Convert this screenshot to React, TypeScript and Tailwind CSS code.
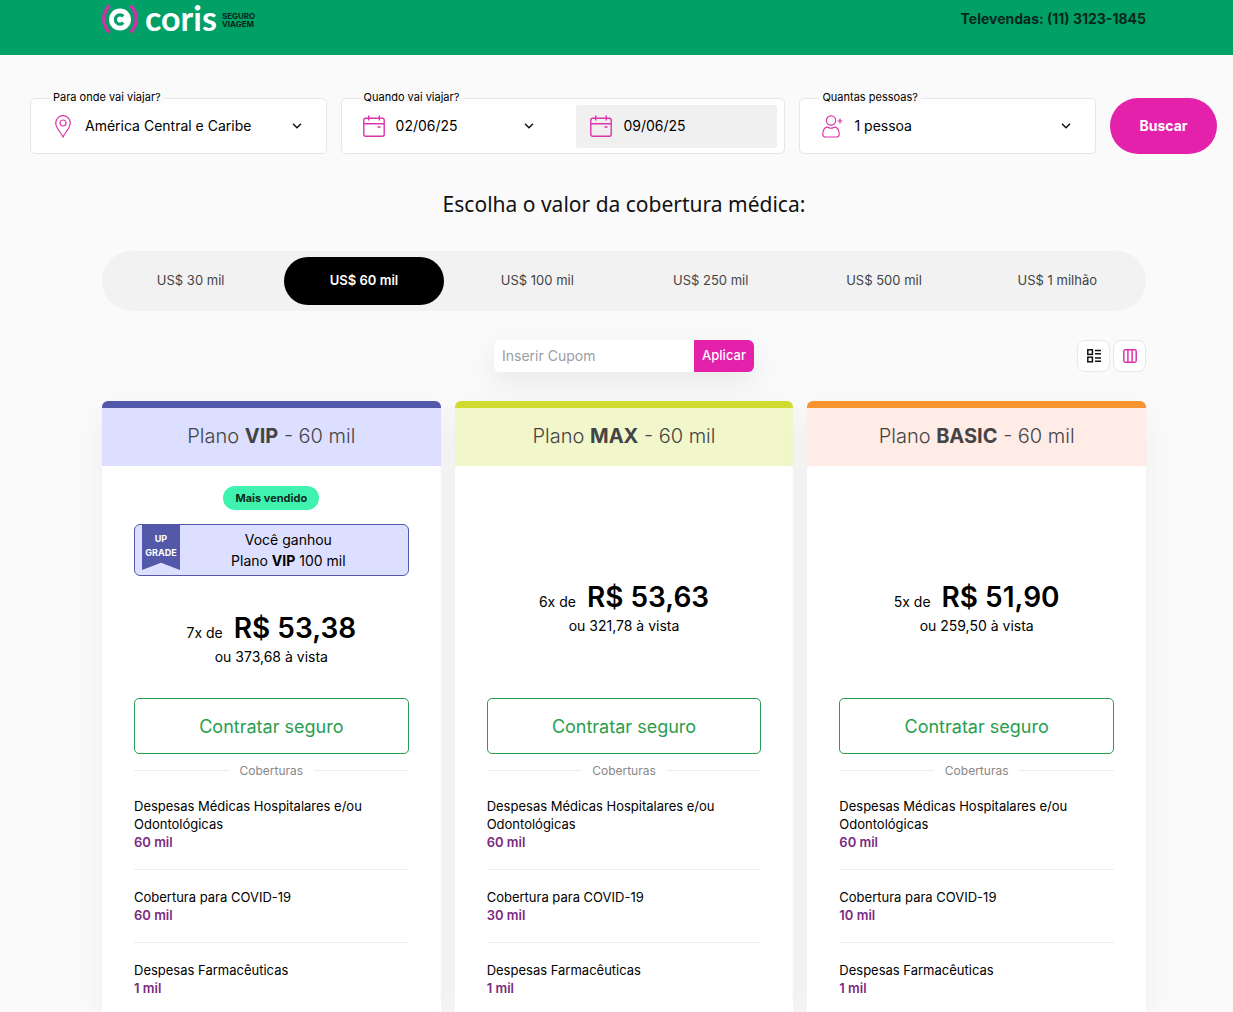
import type { ReactNode } from "react";

function Logo() {
  return (
    <a href="#" className="flex items-start" aria-label="Coris Seguro Viagem">
      <svg width="36" height="30" viewBox="0 0 36 30" fill="none" className="mt-1 shrink-0">
        <path d="M7.5 1.5C4.5 4.5 1.8 9 1.8 15S4.5 25.5 7.5 28.5" stroke="#d42fa6" strokeWidth="3.4" />
        <path d="M28.5 1.5C31.5 4.5 34.2 9 34.2 15S31.5 25.5 28.5 28.5" stroke="#d42fa6" strokeWidth="3.4" />
        <circle cx="18" cy="15.5" r="11" fill="#fff" />
        <path d="M21.3 12.3A4.6 4.6 0 1 0 21.3 18.7" stroke="#00a067" strokeWidth="3.2" />
      </svg>
      <span className="ml-[7px] font-['Lato',sans-serif] text-[34px] leading-9 font-bold text-white">coris</span>
      <span className="mt-3 ml-[5px] text-[8px] leading-2 font-bold text-[#06281c]">
        SEGURO
        <br />
        VIAGEM
      </span>
    </a>
  );
}

function Chevron() {
  return (
    <svg width="10" height="6" viewBox="0 0 10 6" fill="none" stroke="#111" strokeWidth="1.5" className="pointer-events-none shrink-0">
      <path d="M1 0.8L5 4.8L9 0.8" />
    </svg>
  );
}

function PinIcon() {
  return (
    <svg width="16" height="23" viewBox="0 0 16 23" fill="none" stroke="#dc35ab" strokeWidth="1.2" className="shrink-0">
      <path d="M8 22C6 17.5 0.7 13 0.7 8A7.3 7.3 0 0 1 15.3 8C15.3 13 10 17.5 8 22Z" />
      <circle cx="8" cy="8" r="3" />
    </svg>
  );
}

function CalendarIcon() {
  return (
    <svg width="22" height="22" viewBox="0 0 22 22" fill="none" stroke="#dc35ab" strokeWidth="1.4" className="shrink-0">
      <rect x="0.8" y="3.2" width="20.4" height="18" rx="1.8" />
      <path d="M0.8 8.7H21.2M5.7 0.5V5.5M16.3 0.5V5.5M14.5 12H17.5" />
    </svg>
  );
}

function PersonIcon() {
  return (
    <svg width="21" height="23" viewBox="0 0 21 23" fill="none" stroke="#dc35ab" strokeWidth="1.2" className="shrink-0">
      <circle cx="9" cy="5.5" r="4.6" />
      <path d="M3.5 22C1.5 22 0.8 21 0.8 19.2C0.8 15 2.8 12.2 5 12.2C6.3 12.2 7 13.2 9 13.2S11.7 12.2 13 12.2C15.2 12.2 17.2 15 17.2 19.2C17.2 21 16.5 22 14.5 22Z" />
      <path d="M18 3.5V8.5M15.5 6H20.5" />
    </svg>
  );
}

function Field({ id, label, children }: { id: string; label: string; children: ReactNode }) {
  return (
    <div className="relative flex h-14 items-center rounded-[5px] border border-[#e6e6e8] bg-white">
      <label htmlFor={id} className="absolute -top-[9px] left-[19px] bg-[#fafafa] px-[3px] text-[11px] leading-[14px]">
        {label}
      </label>
      {children}
    </div>
  );
}

function SelectField({ id, label, value, icon }: { id: string; label: string; value: string; icon: ReactNode }) {
  return (
    <Field id={id} label={label}>
      <div className="relative flex w-full items-center pr-6 pl-[22px]">
        <span className="flex w-8 shrink-0">{icon}</span>
        <select id={id} defaultValue={value} className="min-w-0 flex-1 appearance-none bg-transparent text-sm leading-6 outline-none">
          <option>{value}</option>
        </select>
        <Chevron />
      </div>
    </Field>
  );
}

const tabs = ["US$ 30 mil", "US$ 60 mil", "US$ 100 mil", "US$ 250 mil", "US$ 500 mil", "US$ 1 milhão"];

type Plan = {
  name: string;
  times: string;
  price: string;
  total: string;
  covid: string;
  header: string;
  upgrade: boolean;
};

const plans: Plan[] = [
  { name: "VIP", times: "7x de", price: "R$ 53,38", total: "ou 373,68 à vista", covid: "60 mil", header: "border-[#5359a8] bg-[#dcdfff]", upgrade: true },
  { name: "MAX", times: "6x de", price: "R$ 53,63", total: "ou 321,78 à vista", covid: "30 mil", header: "border-[#cfdb2f] bg-[#f2f6cb]", upgrade: false },
  { name: "BASIC", times: "5x de", price: "R$ 51,90", total: "ou 259,50 à vista", covid: "10 mil", header: "border-[#f7942f] bg-[#ffece6]", upgrade: false },
];

function UpgradeBox() {
  return (
    <>
      <span className="mt-5 rounded-full bg-[#3ff3ae] px-3 text-[11px] leading-6 font-bold text-[#0d2b20]">Mais vendido</span>
      <div className="mt-3.5 flex w-full items-start rounded-md border border-[#5359a8] bg-[#dcdfff] pl-[7px]">
        <div className="flex h-[45px] w-[38px] shrink-0 flex-col bg-[#5359a8] pt-[7px] text-center text-[9px] leading-[14px] font-bold text-white [clip-path:polygon(0_0,100%_0,100%_100%,50%_84%,0_100%)]">
          <span>UP</span>
          <span>GRADE</span>
        </div>
        <p className="flex-1 py-1 pr-[11px] text-center text-sm leading-[21px]">
          Você ganhou
          <br />
          Plano <b>VIP</b> 100 mil
        </p>
      </div>
    </>
  );
}

function PlanCard({ plan }: { plan: Plan }) {
  const coverages = [
    { title: "Despesas Médicas Hospitalares e/ou Odontológicas", value: "60 mil" },
    { title: "Cobertura para COVID-19", value: plan.covid },
    { title: "Despesas Farmacêuticas", value: "1 mil" },
  ];
  return (
    <article className="overflow-hidden rounded-t-md bg-white shadow-[0_10px_30px_rgba(0,0,0,0.05)]">
      <h2 className={"border-t-[7px] pb-[2px] text-center text-xl leading-[56px] font-light text-[#444] " + plan.header}>
        Plano <b className="font-bold">{plan.name}</b> - 60 mil
      </h2>
      <div className="px-8">
        <div className={plan.upgrade ? "flex h-[232px] flex-col items-center pb-[30px]" : "flex h-[232px] flex-col items-center pb-[61px]"}>
          {plan.upgrade && <UpgradeBox />}
          <p className="mt-auto flex items-baseline gap-[11px] leading-9">
            <span className="text-sm">{plan.times}</span>
            <strong className="text-[28px] font-semibold">{plan.price}</strong>
          </p>
          <p className="text-sm leading-[22px]">{plan.total}</p>
        </div>
        <button className="h-14 w-full rounded-[5px] border border-[#2b9d4e] bg-white pt-0.5 text-lg text-[#2b9d4e]">Contratar seguro</button>
        <div className="flex items-center gap-[11px] pt-2 text-xs leading-[17px] text-[#888] before:h-px before:flex-1 before:bg-[#ececec] after:h-px after:flex-1 after:bg-[#ececec]">
          <span>Coberturas</span>
        </div>
        <dl className="text-[13px] leading-[18px]">
          {coverages.map((c) => (
            <div key={c.title} className="border-b border-[#ececec] py-[18px]">
              <dt>{c.title}</dt>
              <dd className="font-semibold text-[#7b2a80]">{c.value}</dd>
            </div>
          ))}
        </dl>
      </div>
    </article>
  );
}

export default function App() {
  return (
    <div className="h-screen overflow-hidden bg-[#fafafa] font-['Inter',sans-serif] text-black">
      <header className="flex h-[55px] items-start justify-between bg-[#00a067] pr-[87px] pl-[102px]">
        <Logo />
        <a href="tel:1131231845" className="pt-2 text-sm leading-[22px] font-bold text-[#06281c]">
          Televendas: (11) 3123-1845
        </a>
      </header>

      <form className="grid grid-cols-[2fr_3fr_2fr_107px] gap-[14px] pt-[43px] pr-4 pl-[30px]">
        <SelectField id="destino" label="Para onde vai viajar?" value="América Central e Caribe" icon={<span className="pl-0.5"><PinIcon /></span>} />
        <Field id="ida" label="Quando vai viajar?">
          <div className="flex w-full items-center pr-[7px] pl-[21px]">
            <div className="flex flex-1 items-center pr-[42px]">
              <CalendarIcon />
              <input id="ida" defaultValue="02/06/25" className="ml-[11px] w-0 flex-1 bg-transparent text-sm leading-6 outline-none" />
              <Chevron />
            </div>
            <div className="flex h-[43px] w-[201px] items-center rounded-[3px] bg-[#f0f0f0] px-[14px]">
              <CalendarIcon />
              <input aria-label="Data de volta" defaultValue="09/06/25" className="ml-[11px] w-0 flex-1 bg-transparent text-sm leading-6 outline-none" />
            </div>
          </div>
        </Field>
        <SelectField id="pessoas" label="Quantas pessoas?" value="1 pessoa" icon={<PersonIcon />} />
        <button type="button" className="h-14 rounded-full bg-[#e321ab] text-sm font-bold text-white">
          Buscar
        </button>
      </form>

      <main className="pr-[87px] pl-[102px]">
        <h1 className="pt-[34px] text-center font-['Noto_Sans',sans-serif] text-[21px] leading-8 text-[#111]">Escolha o valor da cobertura médica:</h1>

        <nav className="mt-[31px] grid h-[60px] grid-cols-6 items-center rounded-full bg-[#f2f2f2] px-0.5">
          {tabs.map((t, i) => (
            <div key={t} className="px-[7px]">
              <button
                className={
                  i === 1
                    ? "h-12 w-full rounded-full bg-black text-[13px] font-semibold text-white"
                    : "h-12 w-full rounded-full text-[13px] text-[#444]"
                }
              >
                {t}
              </button>
            </div>
          ))}
        </nav>

        <div className="mt-[29px] grid grid-cols-[1fr_auto_1fr] items-center">
          <form className="col-start-2 flex h-8 rounded-md shadow-[0_10px_30px_rgba(0,0,0,0.08)]">
            <input aria-label="Inserir Cupom" placeholder="Inserir Cupom" className="w-[200px] rounded-l-md bg-white px-2 text-sm outline-none placeholder:text-[#9a9ca5]" />
            <button type="button" className="w-[60px] rounded-r-md bg-[#e321ab] text-[13px] font-medium text-white">
              Aplicar
            </button>
          </form>
          <div className="flex justify-end gap-[3px]">
            <button aria-label="Ver em lista" className="flex h-8 w-[33px] items-center justify-center rounded-lg border border-[#e8e8ec] bg-white">
              <svg width="14" height="14" viewBox="0 0 14 14" fill="none" stroke="#111" strokeWidth="1.5">
                <rect x="0.8" y="0.8" width="4.6" height="4.6" />
                <rect x="0.8" y="8.2" width="4.6" height="4.6" />
                <path d="M8 1.5H14M8 4.8H14M8 9H14M8 12.3H14" />
              </svg>
            </button>
            <button aria-label="Ver em colunas" className="flex h-8 w-[33px] items-center justify-center rounded-lg border border-[#e8e8ec] bg-white">
              <svg width="14" height="14" viewBox="0 0 14 14" fill="none" stroke="#dc35ab" strokeWidth="1.5">
                <rect x="0.8" y="0.8" width="12.4" height="12.4" rx="1.6" />
                <path d="M4.9 0.8V13.2M9.1 0.8V13.2" />
              </svg>
            </button>
          </div>
        </div>

        <section className="mt-[29px] grid grid-cols-3 gap-[14px]">
          {plans.map((p) => (
            <PlanCard key={p.name} plan={p} />
          ))}
        </section>
      </main>
    </div>
  );
}
